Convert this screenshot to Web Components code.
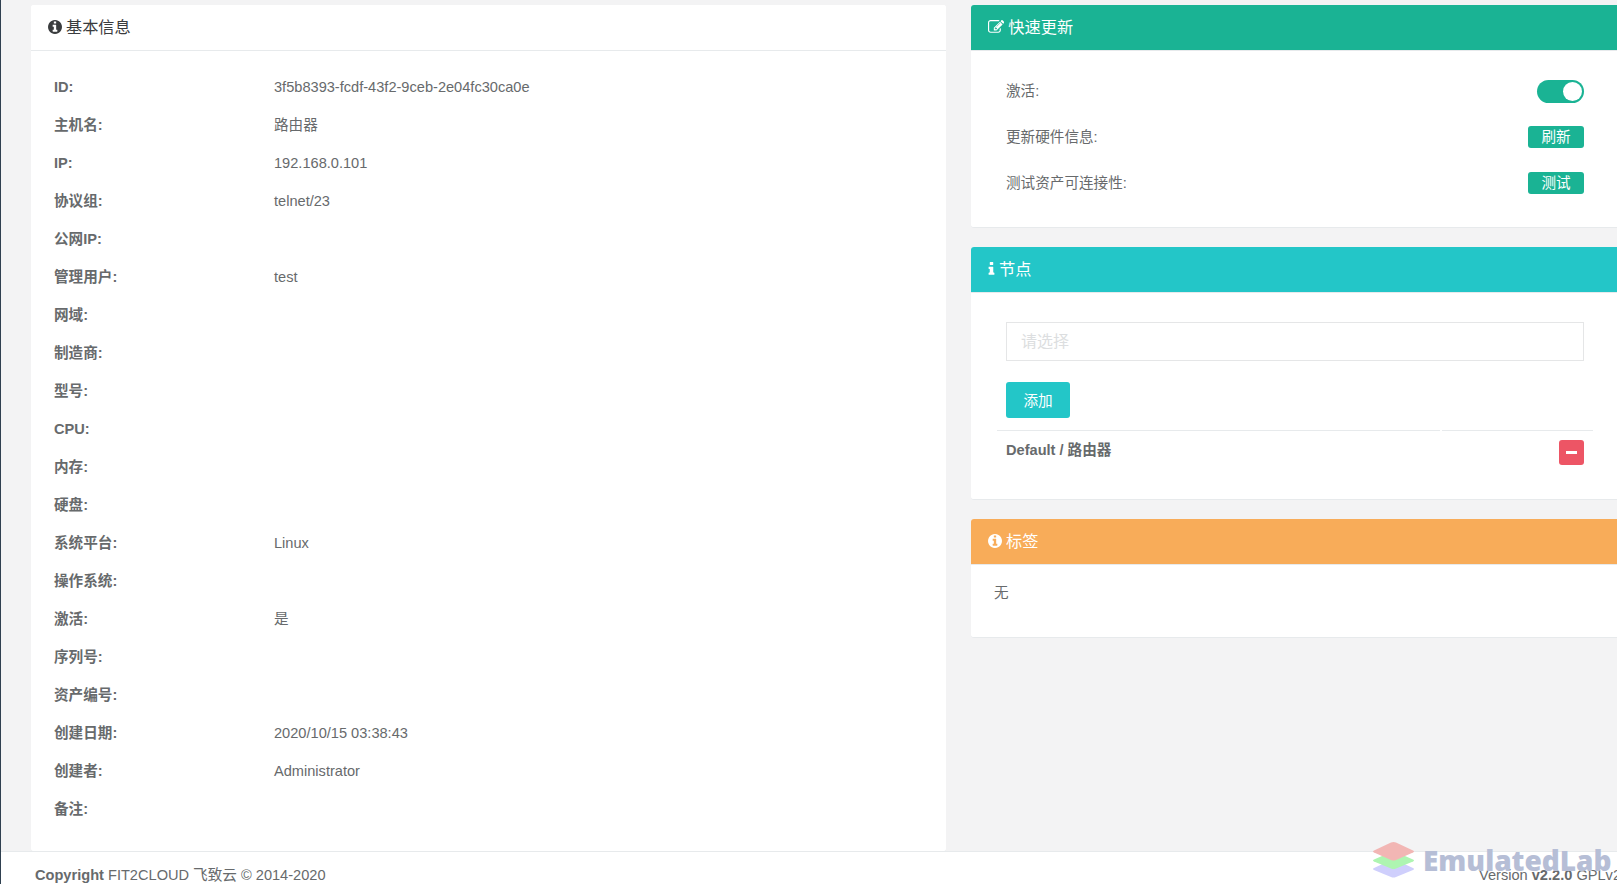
<!DOCTYPE html>
<html lang="zh"><head><meta charset="utf-8"><title>资产详情</title>
<style>
html,body{margin:0;height:100%;overflow:hidden;background:#f3f3f4}
body{font-family:"Liberation Sans","Noto Sans CJK SC",sans-serif;font-size:14.6px;line-height:20px;color:#676a6c}
</style></head><body>
<x-app>
  <x-panel title-text="基本信息" icon="info-circle" slot="left" flush>
    <x-info-row label="ID:">3f5b8393-fcdf-43f2-9ceb-2e04fc30ca0e</x-info-row>
    <x-info-row label="主机名:">路由器</x-info-row>
    <x-info-row label="IP:">192.168.0.101</x-info-row>
    <x-info-row label="协议组:">telnet/23</x-info-row>
    <x-info-row label="公网IP:"></x-info-row>
    <x-info-row label="管理用户:">test</x-info-row>
    <x-info-row label="网域:"></x-info-row>
    <x-info-row label="制造商:"></x-info-row>
    <x-info-row label="型号:"></x-info-row>
    <x-info-row label="CPU:"></x-info-row>
    <x-info-row label="内存:"></x-info-row>
    <x-info-row label="硬盘:"></x-info-row>
    <x-info-row label="系统平台:">Linux</x-info-row>
    <x-info-row label="操作系统:"></x-info-row>
    <x-info-row label="激活:">是</x-info-row>
    <x-info-row label="序列号:"></x-info-row>
    <x-info-row label="资产编号:"></x-info-row>
    <x-info-row label="创建日期:">2020/10/15 03:38:43</x-info-row>
    <x-info-row label="创建者:">Administrator</x-info-row>
    <x-info-row label="备注:"></x-info-row>
  </x-panel>
  <x-quick-update slot="right"></x-quick-update>
  <x-node-panel slot="right"></x-node-panel>
  <x-panel title-text="标签" icon="info-circle" color="#f8ac59" slot="right" pad="18px 23px 34px">无</x-panel>
</x-app>
<script>
const ICONS={
 'info-circle':['128 128 1536 1536','M1152 1376v-160q0-14-9-23t-23-9h-96v-512q0-14-9-23t-23-9h-320q-14 0-23 9t-9 23v160q0 14 9 23t23 9h96v320h-96q-14 0-23 9t-9 23v160q0 14 9 23t23 9h448q14 0 23-9t9-23zm-128-896v-160q0-14-9-23t-23-9h-192q-14 0-23 9t-9 23v160q0 14 9 23t23 9h192q14 0 23-9t9-23zm640 416q0 209-103 385.5t-279.5 279.5-385.5 103-385.5-103-279.5-279.5-103-385.5 103-385.5 279.5-279.5 385.5-103 385.5 103 279.5 279.5 103 385.5z'],
 'edit':['0 128 1792 1536','M888 1184l116-116-152-152-116 116v56h96v96h56zm440-720q-16-16-33 1l-350 350q-17 17-1 33t33-1l350-350q17-17 1-33zm80 594v190q0 119-84.5 203.5t-203.5 84.5h-832q-119 0-203.5-84.5t-84.5-203.5v-832q0-119 84.5-203.5t203.5-84.5h832q63 0 117 25 15 7 18 23 3 17-9 29l-49 49q-14 14-32 8-23-6-45-6h-832q-66 0-113 47t-47 113v832q0 66 47 113t113 47h832q66 0 113-47t47-113v-126q0-13 9-22l64-64q15-15 35-7t20 29zm-96-738l288 288-672 672h-288v-288zm444 132l-92 92-288-288 92-92q28-28 68-28t68 28l152 152q28 28 28 68t-28 68z'],
 'info':['512 128 768 1536','M1216 1344v128q0 26-19 45t-45 19h-512q-26 0-45-19t-19-45v-128q0-26 19-45t45-19h64v-384h-64q-26 0-45-19t-19-45v-128q0-26 19-45t45-19h384q26 0 45 19t19 45v576h64q26 0 45 19t19 45zm-128-1152v192q0 26-19 45t-45 19h-256q-26 0-45-19t-19-45v-192q0-26 19-45t45-19h256q26 0 45 19t19 45z']
};
function def(name,cls){customElements.define(name,cls)}
function shadow(el,html){el.attachShadow({mode:'open'}).innerHTML=html}

def('x-icon',class extends HTMLElement{
  connectedCallback(){
    const n=this.getAttribute('name');const [vb,d]=ICONS[n];
    const [,,w,h]=vb.split(' ').map(Number);const H=parseFloat(this.getAttribute('size')||14);
    shadow(this,`<style>:host{display:inline-flex;align-items:center}svg{display:block;fill:currentColor}</style>
    <svg viewBox="${vb}" width="${H*w/h}" height="${H}"><path fill-rule="evenodd" d="${d}"/></svg>`);
  }
});

def('x-panel',class extends HTMLElement{
  connectedCallback(){
    const c=this.getAttribute('color');const t=this.getAttribute('title-text');const ic=this.getAttribute('icon');
    const pad=this.getAttribute('pad')||'17px 23px 23px';
    shadow(this,`<style>
    :host{display:block;background:#fff;border-radius:3px;overflow:hidden;border-bottom:1px solid #e7eaec;box-sizing:border-box}
    :host([flush]){height:100%}
    header{height:46px;box-sizing:border-box;display:flex;align-items:center;gap:4px;padding:0 0 1px 17px;font-size:16.2px;
      background:${c||'#fff'};color:${c?'#fff':'#3a3c3e'};border-bottom:1px solid #e7eaec}
    .body{padding:${pad}}
    </style><header><x-icon name="${ic}" size="14"></x-icon><span>${t}</span></header><div class="body"><slot></slot></div>`);
  }
});

def('x-info-row',class extends HTMLElement{
  connectedCallback(){
    shadow(this,`<style>:host{display:grid;grid-template-columns:220px 1fr;height:38px;align-items:center}
    b{font-weight:700}</style><b>${this.getAttribute('label')}</b><span><slot></slot></span>`);
  }
});

def('x-switch',class extends HTMLElement{
  connectedCallback(){
    shadow(this,`<style>:host{display:flex;justify-content:flex-end;width:47px;height:23px;background:#1ab394;border-radius:12px;box-sizing:border-box;padding:2px}
    i{display:block;width:19px;height:19px;border-radius:50%;background:#fff}</style><i></i>`);
  }
});

def('x-btn',class extends HTMLElement{
  connectedCallback(){
    shadow(this,`<style>:host{display:inline-flex;align-items:center;justify-content:center;box-sizing:border-box;border-radius:3px;color:#fff;
      background:var(--bg,#1ab394);width:var(--w,56px);height:var(--h,22px);font-size:var(--fs,14.6px)}</style><slot></slot>`);
  }
});

def('x-quick-row',class extends HTMLElement{
  connectedCallback(){
    shadow(this,`<style>:host{display:flex;justify-content:space-between;align-items:center;height:46px}</style>
    <span>${this.getAttribute('label')}</span><slot></slot>`);
  }
});

def('x-quick-update',class extends HTMLElement{
  connectedCallback(){
    shadow(this,`<style>:host{display:block}</style>
    <x-panel title-text="快速更新" icon="edit" color="#1ab394" pad="17px 35px 21px">
      <x-quick-row label="激活:"><x-switch></x-switch></x-quick-row>
      <x-quick-row label="更新硬件信息:"><x-btn>刷新</x-btn></x-quick-row>
      <x-quick-row label="测试资产可连接性:"><x-btn>测试</x-btn></x-quick-row>
    </x-panel>`);
  }
});

def('x-node-panel',class extends HTMLElement{
  connectedCallback(){
    shadow(this,`<style>:host{display:block}
    .sel{height:39px;box-sizing:border-box;border:1px solid #e5e6e7;display:flex;align-items:center;padding:1px 0 0 14px;color:#dcdee0;font-size:16px}
    .add{margin:21px 0 12px;--bg:#23c6c8;--w:64px;--h:36px;padding-top:1px}
    .add-wrap{display:flex}
    .rows{margin:0 -9px;display:grid;grid-template-columns:1fr 151px;column-gap:2px;height:60px}
    .rows>div{border-top:1px solid #e7eaec;padding-top:9px}
    .rows>div:first-child{padding-left:9px}
    .rows>div:last-child{padding-right:9px;display:flex;justify-content:flex-end;align-items:flex-start}
    b{display:block}
    .minus{--bg:#ed5565;--w:25px;--h:25px}
    .minus i{display:block;width:11px;height:3px;background:#fff}
    </style>
    <x-panel title-text="节点" icon="info" color="#23c6c8" pad="29px 35px 9px">
      <div class="sel">请选择</div>
      <div class="add-wrap"><x-btn class="add">添加</x-btn></div>
      <div class="rows"><div><b>Default / 路由器</b></div><div><x-btn class="minus"><i></i></x-btn></div></div>
    </x-panel>`);
  }
});

def('x-watermark',class extends HTMLElement{
  connectedCallback(){
    shadow(this,`<style>:host{position:absolute;left:1371px;top:842px;display:flex;align-items:center;gap:8px;pointer-events:none;white-space:nowrap}
    span{font:800 28px/1 "Open Sans","Liberation Sans",sans-serif;color:#b6bed6;margin-top:-1px}</style>
    <svg width="43" height="36" viewBox="0 0 43 36">
      <path fill="#cfcffc" d="M21.500 17 41 26q2 1 0 2l-17 7q-2.500 1-5 0L2 28q-2-1 0-2z"/>
      <path fill="#aef5b1" d="M21.500 9 41 17.500q2 1 0 2l-17 7q-2.500 1-5 0l-17-7q-2-1 0-2z"/>
      <path fill="#f2b6b4" d="M19 .5q2.500-1 5 0l17 8q2 1 0 2l-17 7.500q-2.500 1-5 0L2 10.500q-2-1 0-2z"/>
    </svg><span>EmulatedLab</span>`);
  }
});

def('x-footer',class extends HTMLElement{
  connectedCallback(){
    shadow(this,`<style>:host{display:flex;justify-content:space-between;align-items:center;height:33px;box-sizing:border-box;background:#fff;border-top:1px solid #e7eaec;padding:13px 0 0 34px;margin-right:-4px;white-space:nowrap}</style>
    <span><b>Copyright</b> FIT2CLOUD 飞致云 © 2014-2020</span><span>Version <b>v2.2.0</b> GPLv2</span>`);
  }
});

def('x-app',class extends HTMLElement{
  connectedCallback(){
    shadow(this,`<style>:host{display:flex;flex-direction:column;height:884px;width:1617px;box-sizing:border-box;border-left:1px solid #2f4050;overflow:hidden;position:relative}
    main{flex:none;height:846px;margin-top:5px;padding-left:30px;display:grid;grid-template-columns:915px 648px;column-gap:25px}
    .r{display:flex;flex-direction:column;gap:19px}
    </style><main><div><slot name="left"></slot></div><div class="r"><slot name="right"></slot></div></main>
    <x-footer></x-footer><x-watermark></x-watermark>`);
  }
});
</script>
</body></html>
